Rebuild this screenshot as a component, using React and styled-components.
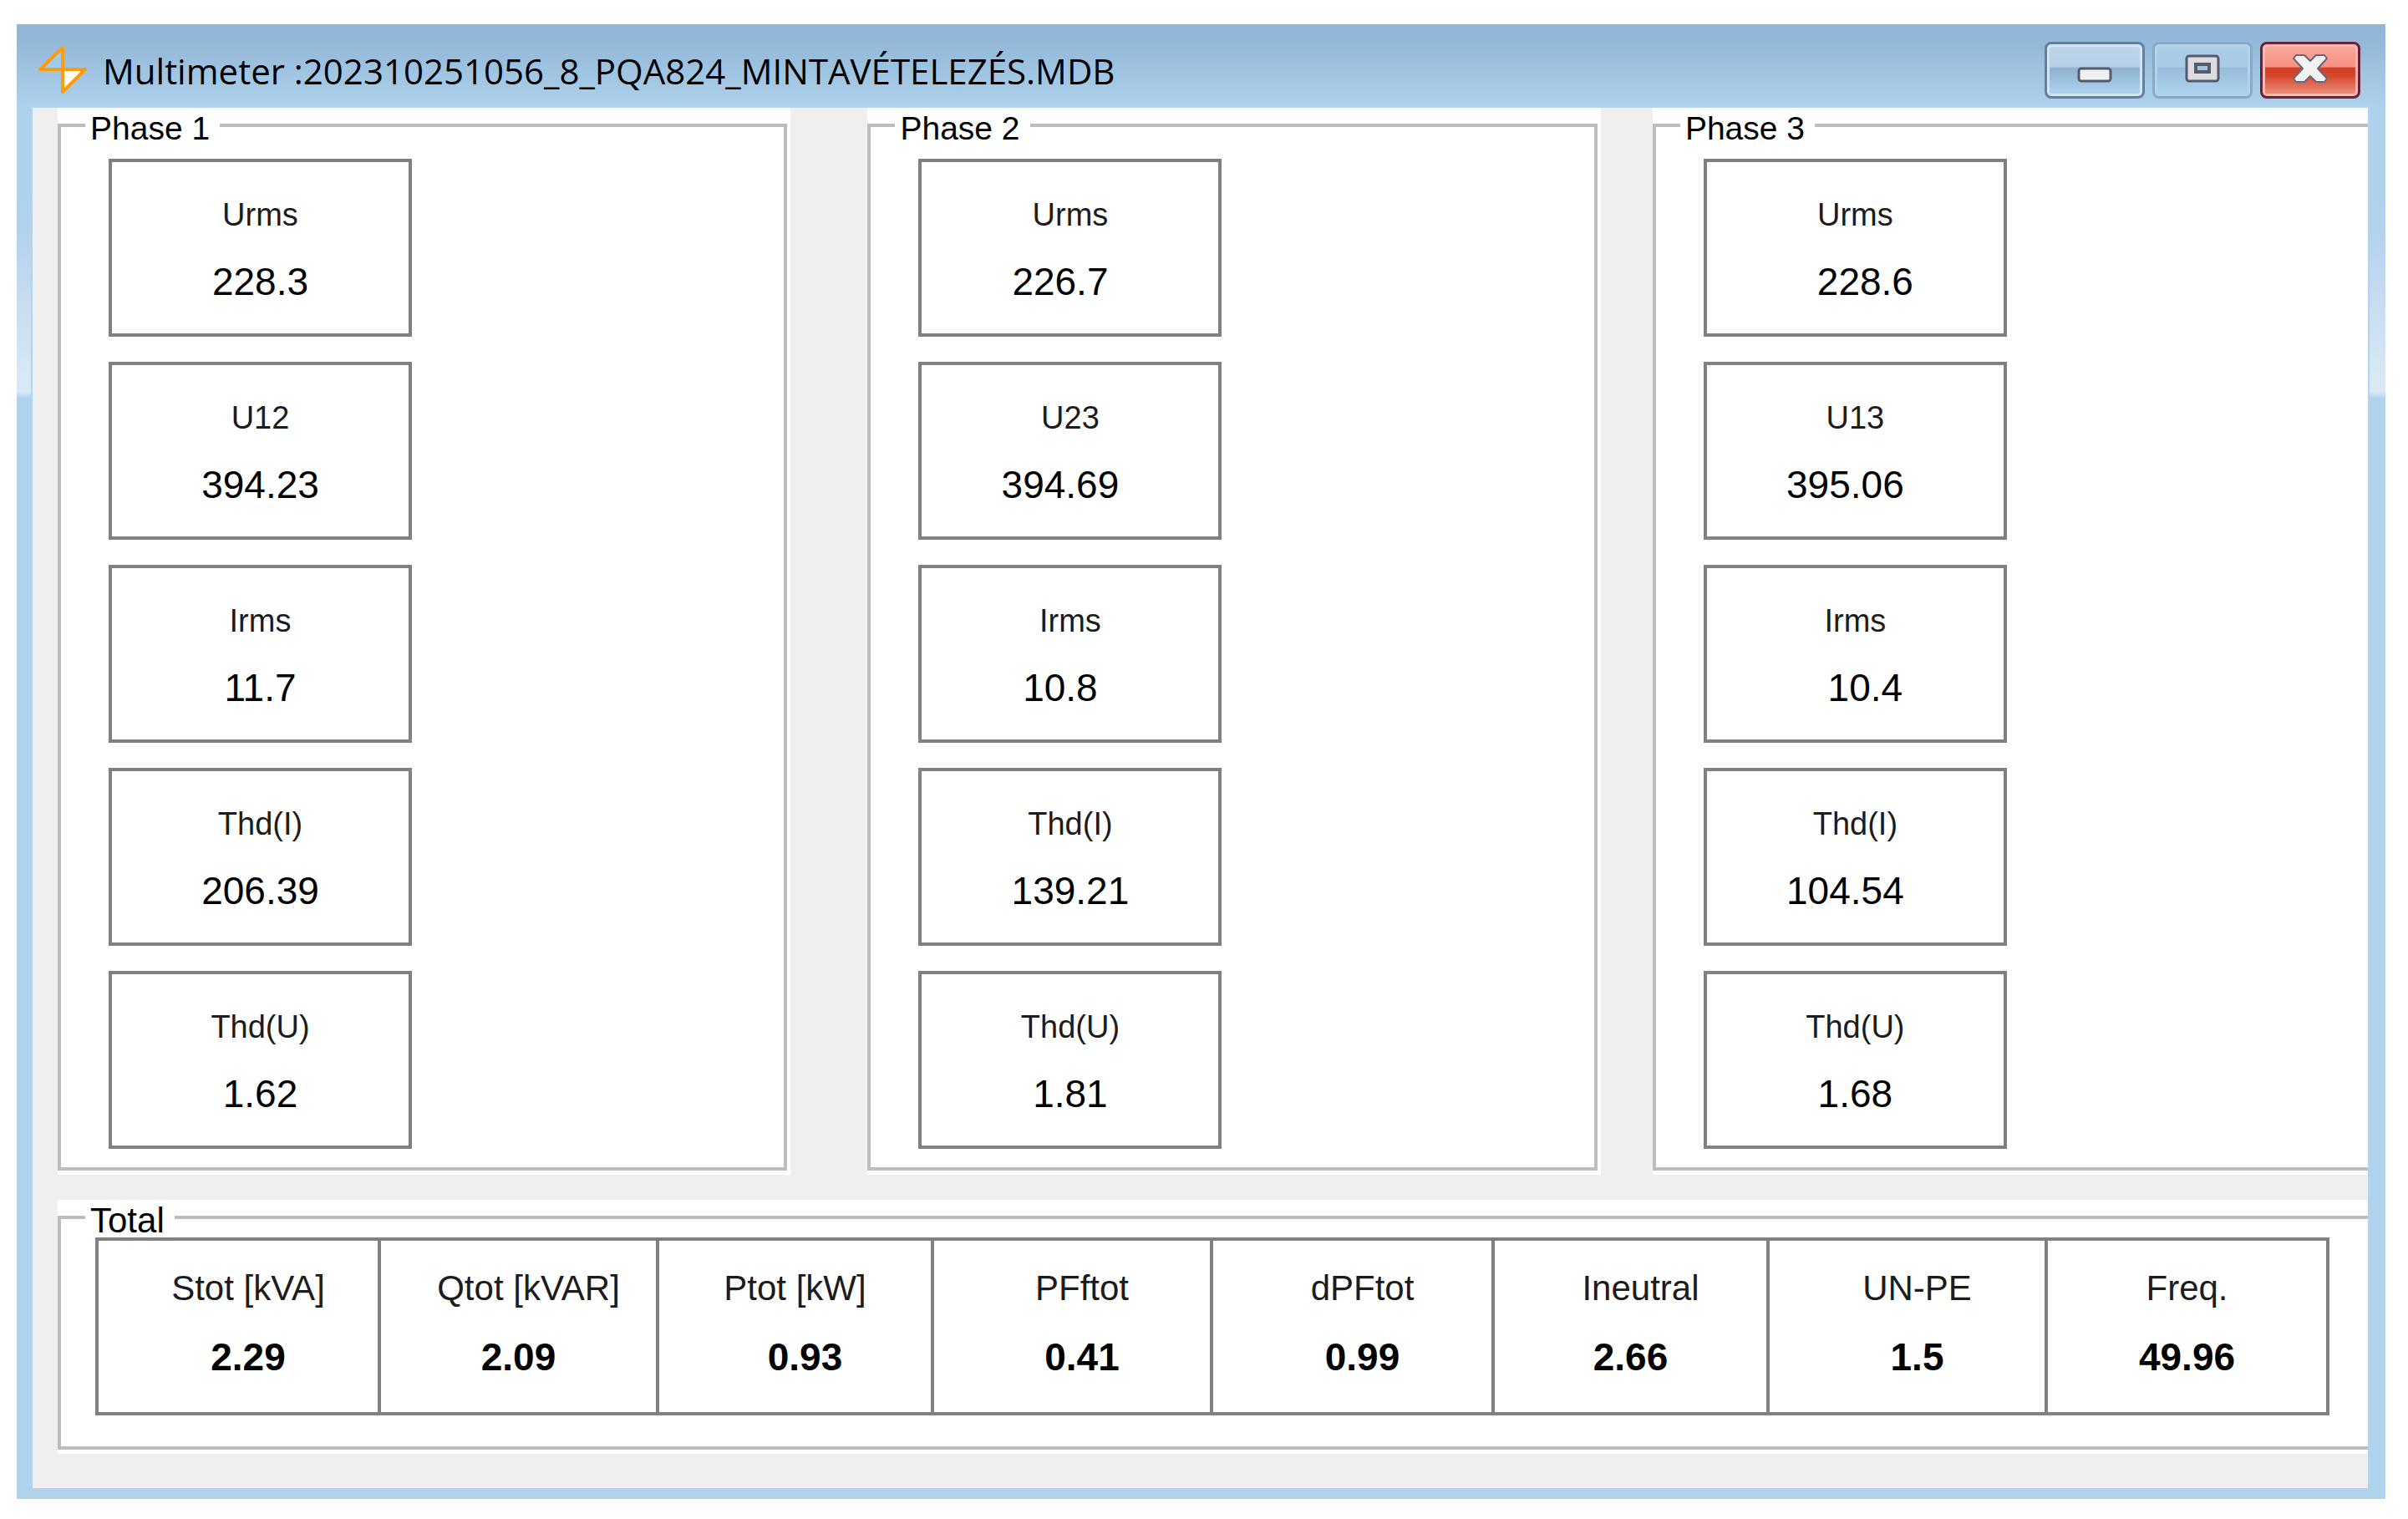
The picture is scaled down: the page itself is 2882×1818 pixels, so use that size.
import React from 'react';
import styled, { createGlobalStyle, css } from 'styled-components';

const GlobalStyle = createGlobalStyle`
  * { box-sizing: border-box; }
  body {
    margin: 0;
    background: #fff;
    color: #000;
    font-family: "Liberation Sans", Arial, sans-serif;
  }
`;

const Window = styled.main`
  margin: 29px 27px 24px 20px;
  padding: 0 21px 13px 19px;
  background: linear-gradient(
    #8fb6d5 0, #94b9d8 24px, #aed2ec 100px, #aed2ec 190px, #b3d2ec 250px,
    #c6dcf1 330px, #d8e8f5 420px, #d8e8f5 440px, #afd2ed 448px
  );
`;
const TitleBar = styled.header`
  display: flex;
  align-items: center;
  height: 100px;
  margin: 0 -21px 0 -19px;
  padding: 10px 30px 0 25px;
`;
const Title = styled.h1`
  flex: 1;
  margin: 0 0 0 18px;
  padding-top: 2px;
  font: 400 42px/60px "Open Sans", "Noto Sans", sans-serif;
  white-space: nowrap;
`;
const Controls = styled.div`
  display: flex;
  gap: 9px;
`;

const buttonLooks = {
  normal: css`
    border-color: #647f9f;
    box-shadow: inset 0 0 0 3px #d3e4f3;
    background: linear-gradient(#bdd5ea 0, #b4cfe6 44%, #8db2cf 45%, #a9cfec 90%);
  `,
  faded: css`
    border-color: #87a9c6;
    box-shadow: inset 0 0 0 3px #b4d2ea;
    background: linear-gradient(#adcde8 0, #a8cae6 44%, #97bbd9 45%, #acd1ed 90%);
  `,
  close: css`
    border-color: #6b2238;
    box-shadow: inset 0 0 0 3px #f9b9b0;
    background: linear-gradient(#fdaaa0 0, #f59081 44%, #d23c22 45%, #d6452c 60%, #e98774 92%);
  `,
};
const WindowButton = styled.button`
  display: flex;
  align-items: center;
  justify-content: center;
  width: 120px;
  height: 68px;
  padding: 0 0 4px;
  border: 3px solid;
  border-radius: 8px;
  ${props => buttonLooks[props.$look]}
`;

const Client = styled.div`
  padding: 0 0 41px 30px;
  background: #efefef;
  box-shadow: 0 0 0 2px #b2d4f0;
`;
const Phases = styled.div`
  display: flex;
  gap: 62px;
  margin-bottom: 30px;
`;
// white backing that shows around the group line
const Panel = styled.section`
  flex: ${props => props.$grow || 1} 1 4px;
  min-width: 0;
  margin-right: ${props => (props.$spaced ? '30px' : '0')};
  padding: 0 ${props => (props.$open ? '0' : '4px')} 5px 0;
  background: #fff;
`;
const Group = styled.fieldset`
  min-width: 0;
  margin: 0;
  padding: ${props => (props.$wide ? '3px 0 37px 29px' : '19px 0 22px 29px')};
  border: 4px solid #bdbdbd;
  ${props => props.$open && css`border-right: 0;`}
`;
const Legend = styled.legend`
  padding: 8px 12px 0 6px;
  font-size: ${props => (props.$large ? '42px' : '39px')};
  line-height: 34px;
`;
const Readings = styled.div`
  display: flex;
  flex-direction: column;
  gap: 30px;
  margin-left: 28px;
`;
const Reading = styled.div`
  width: 363px;
  max-width: 100%;
  height: 213px;
  padding-top: 39px;
  border: 4px solid #808080;
  text-align: center;
`;

const leans = { left: '0 24px 0 0', right: '0 0 0 24px' };
const Name = styled.div`
  margin-bottom: 30px;
  padding: ${props => leans[props.$lean] || 0};
  color: #1c1c1c;
  font-size: ${props => (props.$large ? '42px' : '38px')};
  font-weight: 400;
  line-height: 48px;
  white-space: nowrap;
`;
const Value = styled.div`
  padding: ${props => leans[props.$lean] || 0};
  font-size: 46px;
  font-weight: ${props => (props.$bold ? 700 : 400)};
  line-height: 52px;
`;

const TableWrap = styled.div`
  margin: 0 46px 0 12px;
`;
const TotalTable = styled.table`
  width: 100%;
  table-layout: fixed;
  border-collapse: collapse;
  border: 4px solid #808080;

  th, td {
    padding: 0;
    border: solid #808080;
    border-width: 0 4px;
    text-align: center;
    vertical-align: top;
  }
  th { height: 115px; padding-top: 33px; }
  td { height: 94px; }
  ${Name} { margin: 0; }
`;

const phases = [
  {
    title: 'Phase 1',
    grow: 41,
    spaced: true,
    readings: [
      ['Urms', '228.3'],
      ['U12', '394.23'],
      ['Irms', '11.7'],
      ['Thd(I)', '206.39'],
      ['Thd(U)', '1.62'],
    ],
  },
  {
    title: 'Phase 2',
    grow: 41,
    readings: [
      ['Urms', '226.7', 'left'],
      ['U23', '394.69', 'left'],
      ['Irms', '10.8', 'left'],
      ['Thd(I)', '139.21'],
      ['Thd(U)', '1.81'],
    ],
  },
  {
    title: 'Phase 3',
    grow: 40,
    open: true,
    readings: [
      ['Urms', '228.6', 'right'],
      ['U13', '395.06', 'left'],
      ['Irms', '10.4', 'right'],
      ['Thd(I)', '104.54', 'left'],
      ['Thd(U)', '1.68'],
    ],
  },
];

const totals = [
  { name: 'Stot [kVA]', value: '2.29', share: 338, nameLean: 'right', valueLean: 'right' },
  { name: 'Qtot [kVAR]', value: '2.09', share: 333, nameLean: 'right' },
  { name: 'Ptot [kW]', value: '0.93', share: 329, valueLean: 'right' },
  { name: 'PFftot', value: '0.41', share: 334, nameLean: 'right', valueLean: 'right' },
  { name: 'dPFtot', value: '0.99', share: 337, nameLean: 'right', valueLean: 'right' },
  { name: 'Ineutral', value: '2.66', share: 329, nameLean: 'right' },
  { name: 'UN-PE', value: '1.5', share: 333, nameLean: 'right', valueLean: 'right' },
  { name: 'Freq.', value: '49.96', share: 337 },
];
const shareSum = totals.reduce((sum, item) => sum + item.share, 0);

const AppIcon = () => (
  <svg width="60" height="60" viewBox="0 0 60 60" aria-hidden="true">
    <path d="M30 4V29H5Z" fill="#9fcdf2" />
    <path d="M30 29H55L30 55Z" fill="#fff" />
    <path d="M30 3V56L57 29H3Z" fill="none" stroke="#ff9c0a" strokeWidth="4" strokeLinejoin="round" />
  </svg>
);

const MinimizeIcon = () => (
  <svg width="42" height="34" viewBox="0 0 42 34" aria-hidden="true">
    <rect x="2" y="17" width="38" height="15" rx="3" fill="#f0f0f0" stroke="#545b70" strokeWidth="3" />
  </svg>
);

const MaximizeIcon = () => (
  <svg width="42" height="34" viewBox="0 0 42 34" aria-hidden="true">
    <rect x="2" y="2" width="38" height="30" rx="3" fill="#dcdcde" stroke="#545b70" strokeWidth="3" />
    <rect x="13" y="12" width="16" height="9" fill="#9cc3e0" stroke="#545b70" strokeWidth="4" />
  </svg>
);

const CloseIcon = () => (
  <svg width="42" height="34" viewBox="0 0 42 34" aria-hidden="true">
    <path
      d="M4 1H14L21 8L28 1H38L41 5L30 17L41 29L38 33H28L21 26L14 33H4L1 29L12 17L1 5Z"
      fill="#f2f2f2"
      stroke="#66697a"
      strokeWidth="2"
      strokeLinejoin="round"
    />
  </svg>
);

export default function App() {
  return (
    <>
      <GlobalStyle />
      <Window>
        <TitleBar>
          <AppIcon />
          <Title>Multimeter :202310251056_8_PQA824_MINTAVÉTELEZÉS.MDB</Title>
          <Controls>
            <WindowButton type="button" $look="normal" aria-label="Minimize"><MinimizeIcon /></WindowButton>
            <WindowButton type="button" $look="faded" aria-label="Maximize"><MaximizeIcon /></WindowButton>
            <WindowButton type="button" $look="close" aria-label="Close"><CloseIcon /></WindowButton>
          </Controls>
        </TitleBar>
        <Client>
          <Phases>
            {phases.map(phase => (
              <Panel key={phase.title} $grow={phase.grow} $spaced={phase.spaced} $open={phase.open}>
                <Group $open={phase.open}>
                  <Legend>{phase.title}</Legend>
                  <Readings>
                    {phase.readings.map(([name, value, lean]) => (
                      <Reading key={name}>
                        <Name>{name}</Name>
                        <Value $lean={lean}>{value}</Value>
                      </Reading>
                    ))}
                  </Readings>
                </Group>
              </Panel>
            ))}
          </Phases>
          <Panel $open>
            <Group $open $wide>
              <Legend $large>Total</Legend>
              <TableWrap>
                <TotalTable>
                  <colgroup>
                    {totals.map(item => (
                      <col key={item.name} style={{ width: `${(item.share / shareSum) * 100}%` }} />
                    ))}
                  </colgroup>
                  <thead>
                    <tr>
                      {totals.map(item => (
                        <th key={item.name} scope="col">
                          <Name $large $lean={item.nameLean}>{item.name}</Name>
                        </th>
                      ))}
                    </tr>
                  </thead>
                  <tbody>
                    <tr>
                      {totals.map(item => (
                        <td key={item.name}>
                          <Value $bold $lean={item.valueLean}>{item.value}</Value>
                        </td>
                      ))}
                    </tr>
                  </tbody>
                </TotalTable>
              </TableWrap>
            </Group>
          </Panel>
        </Client>
      </Window>
    </>
  );
}
